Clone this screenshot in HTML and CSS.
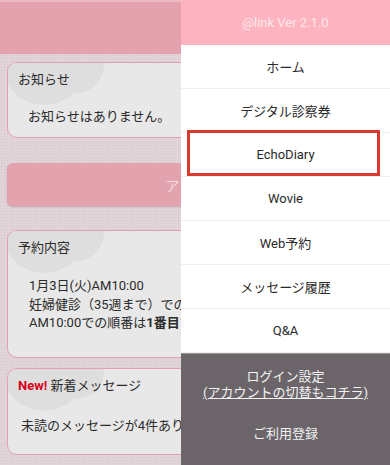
FILE: index.html
```html
<!DOCTYPE html>
<html lang="ja">
<head>
<meta charset="utf-8">
<link rel="stylesheet" href="styles.css">
</head>
<body>
<div class="page">
  <div class="topbar"></div>
  <div class="content">
    <div class="card card-notice">
      <div class="card-title">お知らせ</div>
      <div class="card-body">お知らせはありません。</div>
    </div>
    <div class="app-btn">アプリの使い方</div>
    <div class="card card-reserve">
      <div class="card-title">予約内容</div>
      <div class="card-body">
        <div>1月3日(火)AM10:00</div>
        <div>妊婦健診（35週まで）での予約です。</div>
        <div>AM10:00での順番は<b>1番目</b>です。</div>
      </div>
    </div>
    <div class="card card-msg">
      <div class="card-title"><span class="new">New!</span> 新着メッセージ</div>
      <div class="card-body">未読のメッセージが4件あります。</div>
    </div>
  </div>
</div>
<nav class="drawer">
  <div class="drawer-head">@link Ver 2.1.0</div>
  <ul class="menu">
    <li class="menu-item">ホーム</li>
    <li class="menu-item">デジタル診察券</li>
    <li class="menu-item is-marked">EchoDiary</li>
    <li class="menu-item">Wovie</li>
    <li class="menu-item">Web予約</li>
    <li class="menu-item">メッセージ履歴</li>
    <li class="menu-item">Q&amp;A</li>
  </ul>
  <div class="drawer-foot">
    <div class="login">ログイン設定<br><span class="ul">(アカウントの切替もコチラ)</span></div>
    <div class="register">ご利用登録</div>
  </div>
</nav>
</body>
</html>
```
FILE: styles.css
```css
html, body {
  margin: 0;
  padding: 0;
}
body {
  width: 390px;
  height: 465px;
  overflow: hidden;
  position: relative;
  font-family: "Roboto", "Noto Sans CJK JP", sans-serif;
  font-size: 13px;
  color: #2b2b2b;
}
.page {
  width: 390px;
  height: 465px;
  background-color: #e1d4d9;
  background-image: radial-gradient(circle, #d6c6cc 0.6px, transparent 0.9px);
  background-size: 3px 3px;
}
.topbar {
  height: 52px;
  background: #e3a2ad;
  border-top: 2px solid #eeb9c2;
}
.content {
  padding: 8px 8px 0 7px;
  display: flex;
  flex-direction: column;
}
.card {
  position: relative;
  overflow: hidden;
  background: #e8e8e8;
  border: 1.5px solid #e59fb4;
  border-radius: 10px;
  box-sizing: border-box;
}
.card::before,
.card::after {
  content: "";
  position: absolute;
  border-radius: 50%;
  background: #dedede;
}
.card::before {
  width: 84px;
  height: 84px;
  left: -6px;
  top: -42px;
}
.card::after {
  width: 56px;
  height: 56px;
  left: 40px;
  top: -26px;
}
.card-title,
.card-body {
  position: relative;
  z-index: 1;
  white-space: nowrap;
}
.card-title {
  padding: 8px 0 0 10px;
  line-height: 18px;
}
.card-body {
  line-height: 18px;
}
.card-notice {
  height: 76px;
}
.card-notice .card-body {
  padding: 19px 0 0 20px;
}
.app-btn {
  margin-top: 25px;
  height: 43px;
  background: #e3a3ae;
  border-radius: 6px;
  box-shadow: 0 1px 2px rgba(120, 80, 90, 0.35);
  color: #f5dde2;
  font-size: 14px;
  display: flex;
  align-items: center;
  justify-content: center;
  padding-left: 40px;
}
.card-reserve {
  margin-top: 24px;
  height: 128px;
}
.card-reserve .card-body {
  padding: 20px 0 0 21px;
  line-height: 18.5px;
}
.card-reserve b {
  font-weight: 700;
}
.card-msg {
  margin-top: 10px;
  height: 87px;
}
.card-msg .card-body {
  padding: 22px 0 0 13px;
}
.new {
  color: #d9001b;
  font-weight: 700;
}
.drawer {
  position: absolute;
  z-index: 10;
  top: 0;
  left: 181px;
  width: 209px;
  height: 465px;
  background: #fff;
  display: flex;
  flex-direction: column;
}
.drawer-head {
  height: 45px;
  background: #fdb4c0;
  color: #fce8ec;
  display: flex;
  align-items: center;
  justify-content: center;
}
.menu {
  list-style: none;
  margin: 0;
  padding: 0;
}
.menu-item {
  position: relative;
  height: 43px;
  border-bottom: 1px solid #f0f0f0;
  display: flex;
  align-items: center;
  justify-content: center;
  color: #2a2a2a;
}
.menu-item.is-marked::after {
  content: "";
  position: absolute;
  left: 6px;
  right: 10px;
  top: -3px;
  bottom: 0;
  border: 3px solid #d83a2f;
}
.drawer-foot {
  flex: 1;
  background: #6b656a;
  color: #f2f2f2;
  text-align: center;
  border-top: 1px solid #9a9599;
}
.login {
  padding-top: 15px;
  line-height: 16px;
}
.ul {
  text-decoration: underline;
}
.register {
  padding-top: 24px;
  line-height: 18px;
}
```
